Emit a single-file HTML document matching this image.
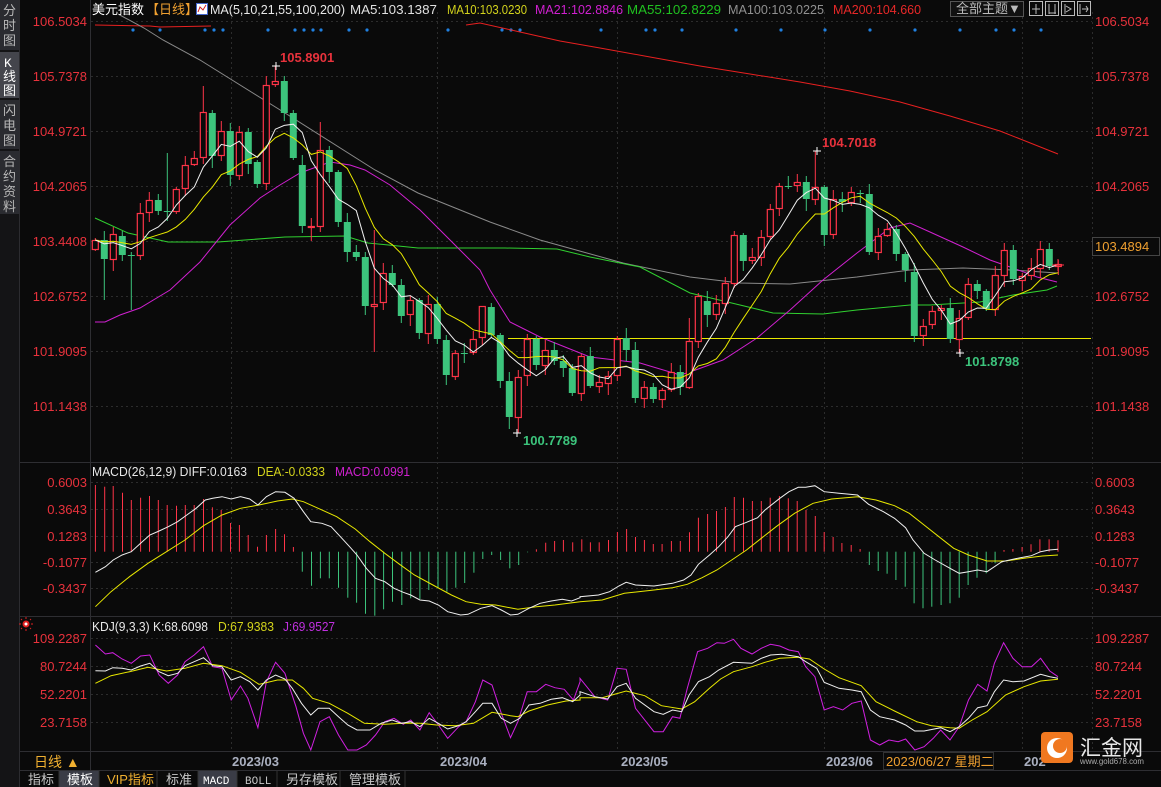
<!DOCTYPE html>
<html><head><meta charset="utf-8">
<style>
html,body{margin:0;padding:0;background:#0a0a0a;width:1161px;height:787px;overflow:hidden}
svg{display:block}
text{font-family:"Liberation Sans","Noto Sans CJK SC",sans-serif;font-size:13px}
</style></head>
<body>
<svg id="s" width="1161" height="787" viewBox="0 0 1161 787" xmlns="http://www.w3.org/2000/svg">
<rect width="1161" height="787" fill="#0a0a0a"/>
<rect x="0" y="0" width="19" height="787" fill="#141416"/>
<rect x="0" y="0" width="19" height="50" fill="#2a2b30"/>
<rect x="0" y="52" width="19" height="46" fill="#44454c"/>
<rect x="0" y="100" width="19" height="49" fill="#2a2b30"/>
<rect x="0" y="151" width="19" height="63" fill="#2a2b30"/>
<line x1="19.5" y1="0" x2="19.5" y2="787" stroke="#2c2c30"/>
<g fill="#b8b8b8">
<text x="3" y="15">分</text><text x="3" y="30">时</text><text x="3" y="45">图</text>
<text x="4" y="67" fill="#fff" style="font-family:'Liberation Mono'">K</text><text x="3" y="81" fill="#fff">线</text><text x="3" y="95" fill="#fff">图</text>
<text x="3" y="115">闪</text><text x="3" y="130">电</text><text x="3" y="145">图</text>
<text x="3" y="166">合</text><text x="3" y="181">约</text><text x="3" y="196">资</text><text x="3" y="211">料</text>
</g>
<g stroke="#2e2e32">
<line x1="90.5" y1="0" x2="90.5" y2="771"/>
<line x1="20" y1="462.5" x2="1161" y2="462.5"/>
<line x1="20" y1="616.5" x2="1161" y2="616.5"/>
<line x1="20" y1="751.5" x2="1161" y2="751.5"/>
<line x1="20" y1="770.5" x2="1161" y2="770.5"/>
</g>
<g id="grid" stroke="#2c2c2c" stroke-dasharray="2,3"></g>
<g id="dyn"></g>
<text x="92" y="14" fill="#fff">美元指数</text>
<text x="146" y="14" fill="#f0a030">【日线】</text>
<rect x="196.5" y="3.5" width="11" height="11" fill="#fff" stroke="#4466cc"/>
<polyline points="198,12 200,7 203,10 206,5" fill="none" stroke="#d02020"/>
<text x="210" y="14" fill="#e8e8e8" textLength="135" lengthAdjust="spacingAndGlyphs">MA(5,10,21,55,100,200)</text>
<text x="350" y="14" fill="#e0e0e0" textLength="87" lengthAdjust="spacingAndGlyphs">MA5:103.1387</text>
<text x="447" y="14" fill="#d4d41c" textLength="80" lengthAdjust="spacingAndGlyphs">MA10:103.0230</text>
<text x="535" y="14" fill="#d020d0" textLength="88" lengthAdjust="spacingAndGlyphs">MA21:102.8846</text>
<text x="627" y="14" fill="#20c020" textLength="94" lengthAdjust="spacingAndGlyphs">MA55:102.8229</text>
<text x="728" y="14" fill="#909090" textLength="96" lengthAdjust="spacingAndGlyphs">MA100:103.0225</text>
<text x="833" y="14" fill="#e82828" textLength="88" lengthAdjust="spacingAndGlyphs">MA200:104.660</text>
<rect x="950.5" y="1.5" width="73" height="15" fill="#111" stroke="#555"/>
<text x="956" y="13" fill="#bbb">全部主题▼</text>
<g fill="none" stroke="#bbb">
<rect x="1029.5" y="1.5" width="13" height="14"/><rect x="1045.5" y="1.5" width="13" height="14"/><rect x="1061.5" y="1.5" width="13" height="14"/><rect x="1077.5" y="1.5" width="13" height="14"/>
<path d="M1036 4v10M1032 9h8M1049 4v10M1049 13h7M1055 4v10M1065 4v10M1066 6l5 3-5 3M1080 4v10M1082 9h6M1086 6l2 3-2 3"/>
</g>
<g id="lab" fill="#e8323c"></g>
<rect x="1092.5" y="237.5" width="67" height="18" fill="#0a0a0a" stroke="#444"/>
<text x="1095" y="251" fill="#f0a030">103.4894</text>
<g font-weight="bold">
<text x="280" y="62" fill="#e8323c">105.8901</text>
<text x="822" y="147" fill="#e8323c">104.7018</text>
<text x="523" y="445" fill="#3cc47c">100.7789</text>
<text x="965" y="366" fill="#3cc47c">101.8798</text>
</g>
<g stroke="#fff"><path d="M272 66h8M276 62v8M813 151h8M817 147v8M513 433h8M517 429v8M956 353h8M960 349v8"/></g>
<text x="92" y="476" fill="#e8e8e8" textLength="155" lengthAdjust="spacingAndGlyphs">MACD(26,12,9) DIFF:0.0163</text>
<text x="257" y="476" fill="#d4d41c" textLength="68" lengthAdjust="spacingAndGlyphs">DEA:-0.0333</text>
<text x="335" y="476" fill="#d020d0" textLength="75" lengthAdjust="spacingAndGlyphs">MACD:0.0991</text>
<text x="92" y="631" fill="#e8e8e8" textLength="116" lengthAdjust="spacingAndGlyphs">KDJ(9,3,3) K:68.6098</text>
<text x="218" y="631" fill="#d4d41c" textLength="56" lengthAdjust="spacingAndGlyphs">D:67.9383</text>
<text x="283" y="631" fill="#c030e0" textLength="52" lengthAdjust="spacingAndGlyphs">J:69.9527</text>
<circle cx="26" cy="624" r="2.5" fill="#fff" stroke="#e02020" stroke-width="2"/>
<g stroke="#e02020"><path d="M26 617v2M26 629v2M19 624h2M31 624h2M21 619l1 1M31 619l-1 1M21 629l1-1M31 629l-1-1"/></g>
<text x="34" y="767" fill="#f0b030" style="font-size:14px">日线 ▲</text>
<g fill="#aab0c0" font-weight="bold">
<text x="232" y="766">2023/03</text><text x="440" y="766">2023/04</text><text x="621" y="766">2023/05</text><text x="826" y="766">2023/06</text><text x="1024" y="766">202</text>
</g>
<rect x="883.5" y="752.5" width="110" height="17" fill="#0a0a0a" stroke="#333"/>
<text x="886" y="766" fill="#f0a030">2023/06/27 星期二</text>
<rect x="20" y="771" width="1141" height="16" fill="#0a0a0a"/>
<rect x="59" y="771" width="40" height="16" fill="#3a3c46"/>
<rect x="198" y="771" width="39" height="16" fill="#3a3c46"/>
<g stroke="#333"><path d="M59 771v16M99 771v16M157 771v16M198 771v16M237 771v16M277 771v16M340 771v16M405 771v16"/></g>
<g fill="#c8c8c8">
<text x="28" y="784">指标</text><text x="67" y="784" fill="#fff">模板</text><text x="107" y="784" fill="#f0b030">VIP指标</text><text x="166" y="784">标准</text>
<text x="203" y="784" fill="#fff" style="font-family:'Liberation Mono';font-size:11px">MACD</text><text x="245" y="784" style="font-family:'Liberation Mono';font-size:11px">BOLL</text>
<text x="286" y="784">另存模板</text><text x="349" y="784">管理模板</text>
</g>
<rect x="1041" y="732" width="32" height="31" rx="4" fill="#f07820"/>
<circle cx="1057" cy="748" r="10" fill="#fff"/>
<circle cx="1060" cy="746" r="7" fill="#f07820"/>
<text x="1080" y="755" fill="#e8e8e8" style="font-size:21px">汇金网</text>
<text x="1080" y="764" fill="#aaa" style="font-size:8px" textLength="64" lengthAdjust="spacingAndGlyphs">www.gold678.com</text>
</svg>
<script>
var out='';
function pl(p,c,w){return '<polyline fill="none" stroke="'+c+'" stroke-width="'+(w||1)+'" points="'+p.map(function(a){return a[0].toFixed(1)+','+a[1].toFixed(1)}).join(' ')+'"/>';}
function z(a,ox,oy,sx,sy){var r=[];for(var i=0;i<a.length;i+=2)r.push([ox+a[i]/sx,oy+a[i+1]/sy]);return r;}
var g='';
[21,76,131,186,241,296,351,406,482,509,536,562,588,638,666,694,722].forEach(function(y){g+='<line x1="91" y1="'+(y+.5)+'" x2="1092" y2="'+(y+.5)+'"/>';});
[231,437,617,824,1022].forEach(function(x){g+='<line x1="'+(x+.5)+'" y1="12" x2="'+(x+.5)+'" y2="751"/>';});
g+='<line x1="1092.5" y1="12" x2="1092.5" y2="751"/>';
document.getElementById('grid').innerHTML=g;
var L=[[21,'106.5034'],[76,'105.7378'],[131,'104.9721'],[186,'104.2065'],[241,'103.4408'],[296,'102.6752'],[351,'101.9095'],[406,'101.1438'],
[482,'0.6003'],[509,'0.3643'],[536,'0.1283'],[562,'-0.1077'],[588,'-0.3437'],[638,'109.2287'],[666,'80.7244'],[694,'52.2201'],[722,'23.7158']],lb='';
L.forEach(function(l){lb+='<text x="87" y="'+(l[0]+5)+'" text-anchor="end">'+l[1]+'</text>'+(l[0]==241?'':'<text x="1095" y="'+(l[0]+5)+'">'+l[1]+'</text>');});
document.getElementById('lab').innerHTML=lb;
[133,160,205,214,223,268,295,304,313,321,349,367,448,502,511,520,601,646,655,682,736,781,825,870,915,960,996,1014,1041].forEach(function(x){out+='<circle cx="'+x+'" cy="30" r="1.6" fill="#2080e0"/>';});
out+=pl([[95,25],[150,26],[160,27],[211,26]],'#e82020');
out+=pl([[466,25],[480,23],[520,32],[560,41],[600,48],[650,57],[700,66],[750,74],[800,82],[850,91],[900,102],[950,116],[1000,131],[1058,154]],'#e82020');
out+=pl([[118,14],[144,28],[163,40],[200,60],[285,113],[375,170],[418,193],[490,222],[540,240],[623,263],[690,277],[740,283],[790,284],[857,277],[910,270],[963,268],[1013,270],[1057,273]],'#8a8a8a');
out+=pl([[95,218],[128,233],[168,242],[218,242],[285,237],[345,236],[368,243],[418,248],[505,248],[557,249],[590,257],[640,267],[690,293],[740,305],[773,313],[823,314],[857,310],[910,305],[930,305],[980,302],[1013,295],[1047,290],[1057,286]],'#30d030');
out+=pl([[95,322],[105,322],[120,315],[140,308],[170,290],[200,262],[230,225],[260,198],[280,185],[300,173],[330,162],[350,165],[365,170],[390,185],[420,210],[450,240],[480,270],[490,290],[510,322],[540,337],[590,357],[640,363],[680,375],[690,372],[723,360],[757,338],[790,310],[823,280],[857,253],[890,228],[910,223],[930,232],[963,247],[990,260],[1013,268],[1037,277],[1057,282]],'#d020d0');
out+='<line x1="508" y1="338.5" x2="1091" y2="338.5" stroke="#e8e800"/>';
var C=[[240,249,1],[240,259,0],[234,259,1],[236,255,0],[255,256,0],[213,255,1],[200,212,1],[200,211,0],[211,212,0],[189,211,1],
[165,188,1],[158,164,1],[112,157,1],[113,156,0],[131,155,1],[131,175,0],[132,175,1],[132,164,0],[162,184,0],[85,183,1],
[81,84,1],[81,113,0],[113,158,0],[165,226,0],[226,227,1],[150,226,1],[150,172,0],[172,222,0],[222,252,0],[252,257,0],
[257,306,0],[304,306,1],[273,302,1],[273,285,0],[285,316,0],[300,314,1],[300,333,0],[304,333,1],[304,339,0],[340,375,0],
[353,376,1],[353,354,0],[339,352,1],[306,337,1],[307,335,0],[335,381,0],[381,417,0],[377,417,1],[339,375,1],[339,365,0],
[350,365,1],[350,361,0],[361,368,0],[368,393,0],[356,393,1],[356,386,0],[382,386,1],[376,383,1],[339,375,1],[338,350,0],
[350,398,0],[387,398,1],[387,399,0],[390,399,1],[372,389,1],[372,387,0],[341,387,1],[296,341,1],[301,315,0],[303,314,1],
[283,303,1],[235,283,1],[235,261,0],[257,260,1],[237,257,1],[209,236,1],[186,208,1],[186,187,0],[182,185,1],[182,199,0],
[187,199,1],[187,235,0],[199,234,1],[199,202,0],[192,202,1],[193,194,0],[194,252,0],[236,252,1],[229,235,1],[229,254,0],
[254,270,0],[272,336,0],[326,335,1],[311,324,1],[308,310,1],[308,339,0],[318,339,1],[284,317,1],[284,291,0],[291,309,0],
[275,309,1],[250,275,1],[250,279,0],[276,280,1],[268,275,1],[249,268,1],[249,266,0],[264,266,1]];
var HI={20:66,25:122,31:230,80:151,8:153,12:86,43:320,66:318},LO={19:190,24:241,31:352,47:433,96:353,1:300,4:310,39:385};
var cl=[];
C.forEach(function(c,i){var x=95.3+i*9,col=c[2]?'#ff3448':'#3cc47c';
var h=HI[i]||c[0]-(2+(i*7)%9),l=LO[i]||c[1]+(2+(i*5)%11);
out+='<line x1="'+x.toFixed(1)+'" y1="'+h+'" x2="'+x.toFixed(1)+'" y2="'+l+'" stroke="'+col+'"/>';
var hgt=Math.max(c[1]-c[0],1);
if(c[2])out+='<rect x="'+(x-3).toFixed(1)+'" y="'+(c[0]+0.5)+'" width="6" height="'+hgt+'" fill="#0a0a0a" stroke="'+col+'" stroke-width="1.2"/>';
else out+='<rect x="'+(x-3.5).toFixed(1)+'" y="'+c[0]+'" width="7" height="'+hgt+'" fill="'+col+'"/>';
cl.push(c[2]?c[0]:c[1]);});
function ma(n){var r=[];for(var i=0;i<cl.length;i++){var s=0;for(var k=0;k<n;k++)s+=cl[Math.max(0,i-k)];r.push([95.3+i*9,s/n]);}return r;}
out+=pl(ma(10),'#e8e800');out+=pl(ma(5),'#f0f0f0');
var B=[258,90,283,95,306,93,331,113,355,135,380,128,404,123,428,135,452,150,477,152,501,150,525,150,550,132,574,157,598,165,623,204,647,210,671,240,696,275,720,240,745,222,769,238,793,276,
817,350,842,392,866,370,890,370,915,398,940,428,964,443,988,476,1013,482,1037,463,1061,440,1086,450,1110,430,1135,432,1159,405,1184,398,1208,410,1232,398,1256,384,1281,353,1305,312,1329,300,1353,315,1378,340,1402,330,1426,292,1450,283,1475,263,1499,258,1523,255,1548,262];
var B2=[5,253,28,262,52,262,77,255,101,231,126,222,150,246,174,255,198,267,222,267,247,258,271,258,296,232,320,188,345,177,369,168,393,156,417,126,442,128,466,138,490,138,514,128,539,123,563,130,587,138,611,165,636,183,660,231,684,246,708,264,733,270,757,282,
782,330,806,348,830,356,854,375,879,395,903,445,927,460,951,455,976,450,1000,445,1025,428,1049,390,1073,368,1098,355,1122,325,1146,285,1170,282,1195,276,1219,268,1243,253,1268,253,1292,256];
var base=455+290/3;
z(B,0,455,2.703,3).concat(z(B2,580,455,2.703,3)).forEach(function(p){var col=p[1]<base?'#ff3448':'#3cc47c';out+='<line x1="'+p[0].toFixed(1)+'" y1="'+base.toFixed(1)+'" x2="'+p[0].toFixed(1)+'" y2="'+p[1].toFixed(1)+'" stroke="'+col+'"/>';});
var DW=[258,352,285,335,306,315,330,300,355,290,380,265,405,240,430,228,455,215,480,200,505,180,530,160,555,135,575,130,600,125,625,132,650,125,675,132,697,150,720,125,745,110,770,112,795,130,820,170,840,200,870,205,895,215,920,245,945,275,965,300,990,340,1015,370,1040,380,1065,400,1090,412,1110,420,1135,435,1160,438,1185,450,1210,470,1245,480,1265,478,1300,460,1330,452,1355,465,1380,480,1400,478,1430,460,1460,445,1490,438,1520,433,1545,438,1568,428];
var DW2=[0,425,50,420,80,410,105,393,125,382,150,390,200,393,250,385,280,375,300,360,320,328,350,300,375,275,400,245,420,215,450,202,480,188,500,165,540,130,565,110,590,97,610,97,635,92,660,110,700,115,750,120,780,148,820,170,850,190,880,218,900,255,930,295,960,315,1000,340,1025,355,1050,350,1075,345,1100,350,1140,320,1190,308,1220,302,1245,290,1268,285,1292,283];
var DY=[258,455,300,410,350,365,400,325,450,290,500,255,550,212,600,180,650,160,700,150,750,138,790,132,820,140,860,160,910,185,960,222,1000,260,1040,295,1080,328,1120,360,1170,390,1220,420,1260,440,1300,448,1340,450,1400,463,1450,455,1500,450,1568,440];
var DY2=[0,440,60,435,120,415,200,405,250,398,290,388,330,368,370,345,410,315,450,285,490,250,530,215,580,175,630,145,680,132,750,125,800,135,850,152,890,175,930,210,970,245,1010,280,1050,300,1100,318,1150,318,1200,310,1250,303,1292,300];
out+=pl(z(DY,0,455,2.703,3).concat(z(DY2,580,455,2.703,3)),'#e8e800');
out+=pl(z(DW,0,455,2.703,3).concat(z(DW2,580,455,2.703,3)),'#f0f0f0');
var J=[258,570,285,597,305,593,330,612,355,625,380,603,405,600,430,660,455,685,480,660,500,620,525,600,550,575,575,635,600,640,625,735,650,693,670,730,697,818,720,680,745,622,770,655,800,755,820,835,840,885,865,800,890,785,915,840,940,885,965,885,990,870,1015,840,1040,800,1065,790,1090,808,1110,795,1135,825,1160,773,1185,810,1210,850,1240,815,1260,800,1285,740,1305,675,1330,690,1355,775,1380,848,1400,800,1425,710,1450,710,1475,688,1500,698,1525,703,1550,735,1568,680];
var J2=[0,670,40,725,75,735,100,640,125,643,150,760,200,830,225,830,250,785,270,790,290,700,318,590,345,580,370,563,390,565,415,553,435,580,465,597,490,580,515,568,540,573,565,585,590,590,610,635,635,665,660,765,685,755,710,765,735,745,760,738,785,855,810,870,835,855,860,860,880,852,905,885,930,875,955,850,975,825,1000,855,1025,815,1050,735,1075,688,1100,708,1120,625,1145,563,1170,610,1195,635,1220,635,1245,610,1270,648,1292,665];
var K=[258,647,285,648,305,638,330,640,355,645,380,633,405,625,430,650,455,662,480,655,500,632,525,620,550,608,575,632,600,635,625,675,650,665,675,680,697,705,720,675,745,660,770,672,790,700,815,745,840,780,860,760,890,760,915,785,940,810,965,825,1000,825,1030,805,1060,795,1085,805,1110,800,1135,815,1160,790,1185,805,1210,822,1240,812,1260,800,1285,770,1305,745,1330,745,1355,790,1380,805,1405,790,1430,750,1460,745,1490,733,1520,728,1548,740,1568,720];
var K2=[0,710,40,725,75,732,100,695,125,685,150,730,200,770,225,778,250,765,275,770,295,720,320,680,350,665,375,645,415,622,465,625,490,610,515,600,545,598,590,605,610,620,640,640,660,682,700,700,735,705,760,710,785,765,810,785,850,795,880,810,905,828,930,828,975,818,1000,830,1025,815,1050,790,1075,758,1100,752,1120,710,1145,675,1170,680,1200,678,1245,658,1270,665,1292,670];
var D=[258,685,300,662,350,650,400,637,450,648,500,640,550,625,600,632,650,652,700,688,750,675,790,675,820,700,845,730,890,745,940,775,985,805,1040,808,1090,805,1135,805,1180,810,1230,812,1280,805,1330,772,1380,782,1400,785,1430,768,1480,750,1530,738,1568,735];
var D2=[0,728,60,728,125,708,175,722,220,752,275,762,310,740,350,700,380,672,415,650,465,635,500,622,540,610,590,607,620,612,660,642,700,668,760,692,800,740,850,768,910,800,950,812,1000,818,1025,820,1060,795,1100,770,1150,720,1200,695,1245,678,1292,673];
out+=pl(z(J,0,455,2.703,3).concat(z(J2,580,455,2.703,3)),'#d020e0');
out+=pl(z(D,0,455,2.703,3).concat(z(D2,580,455,2.703,3)),'#e8e800');
out+=pl(z(K,0,455,2.703,3).concat(z(K2,580,455,2.703,3)),'#f0f0f0');
out+='<line x1="1052" y1="265" x2="1064" y2="265" stroke="#ff3448"/><line x1="1058" y1="259" x2="1058" y2="271" stroke="#ff3448"/>';
document.getElementById('dyn').innerHTML=out;
</script>
</body></html>
